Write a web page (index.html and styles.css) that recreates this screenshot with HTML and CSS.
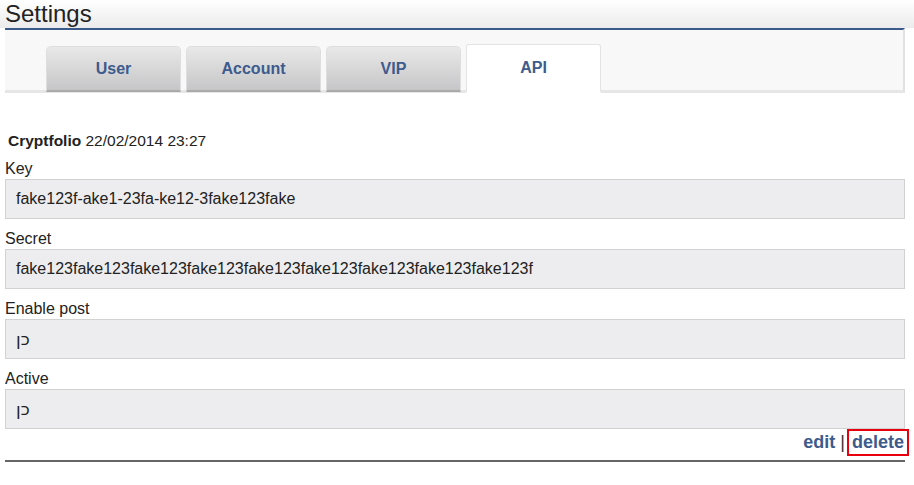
FILE: index.html
```html
<!DOCTYPE html>
<html>
<head>
<meta charset="utf-8">
<link rel="stylesheet" href="styles.css">
</head>
<body>
<header class="page-head"><h1>Settings</h1></header>
<main class="wrap">
  <nav class="tabbar">
    <a class="tab">User</a>
    <a class="tab">Account</a>
    <a class="tab">VIP</a>
    <a class="tab active">API</a>
  </nav>
  <section class="api">
    <p class="title"><b>Cryptfolio</b> 22/02/2014 23:27</p>
    <div class="field"><label>Key</label><div class="box">fake123f-ake1-23fa-ke12-3fake123fake</div></div>
    <div class="field"><label>Secret</label><div class="box">fake123fake123fake123fake123fake123fake123fake123fake123fake123f</div></div>
    <div class="field"><label>Enable post</label><div class="box heb">כן</div></div>
    <div class="field"><label>Active</label><div class="box heb">כן</div></div>
    <div class="actions"><a>edit</a> <span class="sep">|</span><a class="del">delete</a></div>
    <hr class="rule">
  </section>
</main>
</body>
</html>
```
FILE: styles.css
```css
html, body { margin: 0; padding: 0; background: #fff; }
body { font-family: "Liberation Sans", Arial, sans-serif; color: #222; }
.page-head { background: linear-gradient(#ffffff, #ebebeb); height: 28px; padding-left: 5px; }
.page-head h1 { margin: 0; font-weight: normal; font-size: 24px; line-height: 28px; color: #222; }
.wrap { margin: 0 9px 0 5px; }
.tabbar { border-top: 2px solid #3a5a8c; background: #f8f8f8; border-right: 2px solid #e2e2e2; border-bottom: 3px solid #e6e6e6; height: 44px; padding: 16px 0 0 41px; box-sizing: content-box; display: flex; gap: 5px; align-items: flex-end; }
.tab { width: 133px; height: 43px; margin-bottom: -2px; border: 1px solid #dedede; border-bottom: 2px solid #aaa; border-radius: 5px 5px 0 0; background: linear-gradient(#e9e9e9, #c6c6c8); color: #3d5b8c; font-weight: bold; font-size: 16px; display: flex; align-items: center; justify-content: center; box-sizing: content-box; }
.tab.active { background: #fff; border-color: #e4e4e4; border-bottom: 2px solid #fff; height: 46px; margin-bottom: -3px; border-radius: 3px 3px 0 0; }
.api { padding-top: 39px; }
.title { margin: 0 0 9px 3px; font-size: 15.5px; line-height: 18px; }
.title b { font-weight: bold; }
.field { margin-bottom: 10px; }
.field label { display: block; font-size: 16px; line-height: 19px; color: #222; }
.box { margin-top: 1px; height: 38px; border: 1px solid #d2d2d2; background: #ededef; font-size: 16px; line-height: 38px; padding-left: 10px; color: #222; }
.heb { font-family: "DejaVu Sans", sans-serif; font-size: 17px; }
.actions { display: flex; justify-content: flex-end; align-items: center; margin: -10px -4px 0 0; font-size: 18px; font-weight: bold; color: #3d5b8c; line-height: 23px; }
.actions a { color: #3d5b8c; }
.sep { color: #333; font-weight: normal; margin: 0 2px 0 5px; }
.del { display: inline-block; border: 2px solid #e8000f; padding: 0 3px 0 3px; line-height: 23px; }
.rule { margin: 4px 0 0 0; border: 0; border-top: 2px solid #666; }
```
